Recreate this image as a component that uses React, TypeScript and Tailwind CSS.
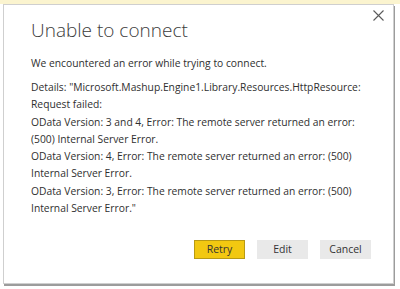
import React from "react";

export default function App() {
  const lines = [
    'Details: "Microsoft.Mashup.Engine1.Library.Resources.HttpResource:',
    "Request failed:",
    "OData Version: 3 and 4, Error: The remote server returned an error:",
    "(500) Internal Server Error.",
    "OData Version: 4, Error: The remote server returned an error: (500)",
    "Internal Server Error.",
    "OData Version: 3, Error: The remote server returned an error: (500)",
    'Internal Server Error."',
  ];
  return (
    <div
      className="w-[400px] h-[289px] bg-white overflow-hidden flex flex-col"
      style={{ fontFamily: '"Open Sans", "Noto Sans", sans-serif' }}
    >
      <div className="h-[4px] bg-[#fbf4cf] shrink-0" />
      <div className="relative ml-[3px] w-[391px] h-[280px] bg-white border border-[#cfcfcf] shadow-[1px_2px_0_#9c9c9c] flex flex-col pl-[27px] pt-[10px]">
        <button className="absolute right-[8px] top-[3px] w-[14px] h-[14px] flex items-center justify-center">
          <svg width="11" height="11" viewBox="0 0 11 11">
            <path d="M0.5 0.5L10.5 10.5M10.5 0.5L0.5 10.5" stroke="#5a5a5a" strokeWidth="1.1" />
          </svg>
        </button>
        <div className="text-[19px] font-light text-[#3b3b3b] leading-[30px] whitespace-nowrap">
          Unable to connect
        </div>
        <div className="mt-[10px] text-[10.3px] leading-[17px] text-[#2f2f2f] whitespace-nowrap">
          We encountered an error while trying to connect.
        </div>
        <div className="mt-[7px] text-[10.3px] leading-[17.3px] text-[#2f2f2f] whitespace-nowrap flex flex-col">
          {lines.map((l, i) => (
            <span key={i}>{l}</span>
          ))}
        </div>
        <div className="mt-auto mb-[24px] mr-[22px] flex justify-end gap-[12px] text-[10.5px] text-[#333]">
          <button className="w-[51px] h-[19px] bg-[#f2c811] border border-[#b89a14] leading-[17px]">
            Retry
          </button>
          <button className="w-[51px] h-[19px] bg-[#e9e9e9] leading-[19px]">Edit</button>
          <button className="w-[51px] h-[19px] bg-[#e9e9e9] leading-[19px]">Cancel</button>
        </div>
      </div>
    </div>
  );
}
